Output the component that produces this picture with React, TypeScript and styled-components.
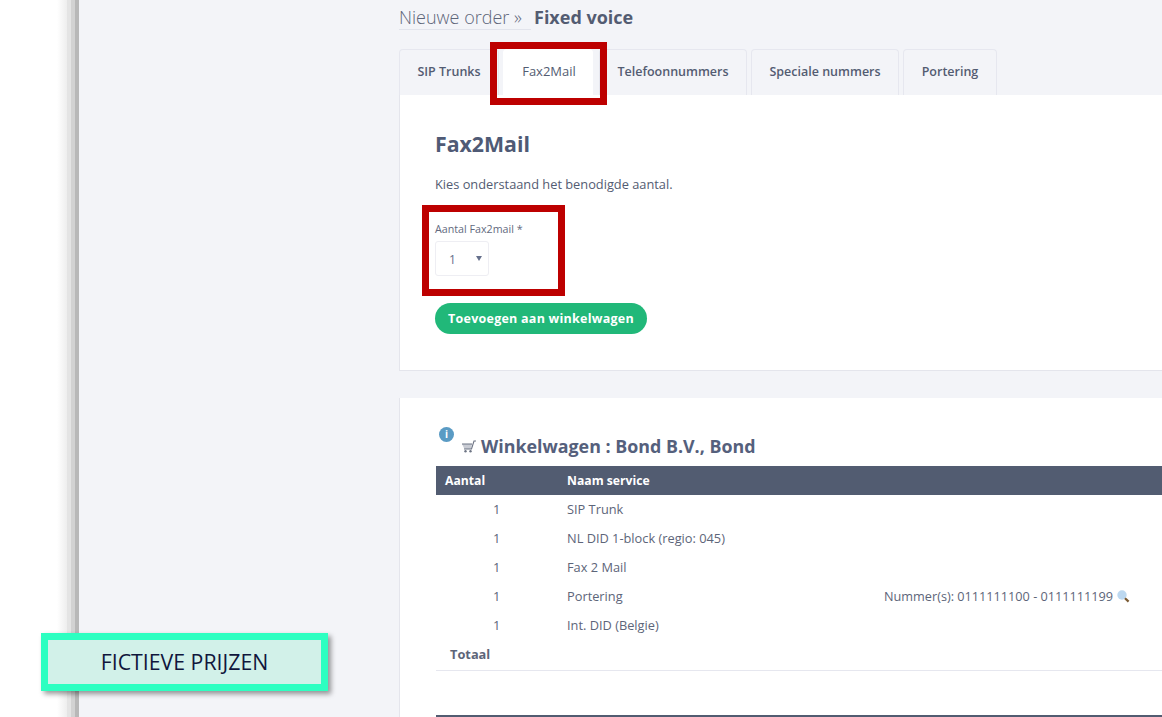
import styled, { createGlobalStyle } from 'styled-components';

const GlobalStyle = createGlobalStyle`
  html, body {
    margin: 0;
    padding: 0;
    height: 100%;
    overflow: hidden;
    background: #f3f4f8;
    font-family: "Open Sans", sans-serif;
    color: #535c72;
  }
`;

const Page = styled.div`
  position: relative;
  display: flex;
  width: 1162px;
  height: 717px;
  overflow: hidden;
`;

const Sidebar = styled.div`
  flex: 0 0 79px;
  box-sizing: border-box;
  background: linear-gradient(
    90deg,
    #fff 0,
    #fff 57px,
    #eeeeee 67px,
    #e4e4e4 67px,
    #e4e4e4 71px,
    #d2d2d2 71px,
    #d2d2d2 75px,
    #b8b8b8 75px,
    #b8b8b8 79px
  );
`;

const Main = styled.main`
  flex: 1;
  min-width: 0;
  padding: 5px 0 0 320px;
`;

const Breadcrumb = styled.div`
  display: flex;
  align-items: flex-start;
  height: 44px;
  font-size: 18px;
  line-height: 24px;
  white-space: nowrap;
`;

const Crumb = styled.span`
  box-sizing: border-box;
  width: 132px;
  height: 25px;
  font-weight: 300;
  color: #5d6579;
  border-bottom: 1px solid #e2e4ec;
`;

const CrumbCurrent = styled.span`
  font-weight: 700;
  margin-left: 3px;
`;

const Tabs = styled.div`
  display: flex;
  gap: 4px;
  height: 46px;
`;

const Tab = styled.div<{ $active?: boolean; $width: number }>`
  box-sizing: border-box;
  width: ${props => props.$width}px;
  height: 46px;
  margin-right: ${props => (props.$active ? 2 : 0)}px;
  padding: ${props => (props.$active ? '12px 0 0 2px' : '13px 0 0')};
  text-align: center;
  font-size: ${props => (props.$active ? 13 : 12.5)}px;
  line-height: 18px;
  font-weight: ${props => (props.$active ? 400 : 600)};
  background: ${props => (props.$active ? '#fff' : '#f3f4f8')};
  border: 1px solid ${props => (props.$active ? '#fff' : '#e6e7ef')};
  border-bottom: none;
  border-radius: 4px 4px 0 0;
`;

const Panel = styled.section`
  box-sizing: border-box;
  background: #fff;
  border-left: 1px solid #e4e5ec;
  border-bottom: 1px solid #e4e5ec;
`;

const FormPanel = styled(Panel)`
  height: 276px;
  padding: 34px 0 0 35px;
  margin-bottom: 27px;
`;

const CartPanel = styled(Panel)`
  height: 330px;
  padding: 24px 0 0 36px;
  border-bottom: none;
`;

const Title = styled.h2`
  margin: 0;
  font-size: 21.3px;
  line-height: 30px;
  font-weight: 700;
  color: #4f5a75;
`;

const Intro = styled.p`
  margin: 15px 0 0;
  font-size: 12.8px;
  line-height: 20px;
`;

const Field = styled.div`
  margin-top: 28px;
`;

const FieldLabel = styled.label`
  display: block;
  font-size: 10.7px;
  line-height: 14px;
  color: #626a7e;
`;

const SelectBox = styled.div`
  position: relative;
  box-sizing: border-box;
  width: 54px;
  height: 35px;
  margin-top: 5px;
  padding-left: 13px;
  border: 1px solid #eeeef3;
  border-radius: 3px;
  font-size: 12px;
  line-height: 35px;
  color: #66708c;
`;

const Caret = styled.span`
  position: absolute;
  right: 6px;
  top: 14px;
  width: 0;
  height: 0;
  border-left: 3px solid transparent;
  border-right: 3px solid transparent;
  border-top: 5px solid #66708c;
`;

const AddButton = styled.button`
  display: block;
  box-sizing: border-box;
  width: 212px;
  height: 31px;
  margin-top: 27px;
  padding: 0;
  border: none;
  border-radius: 16px;
  background: #21b879;
  color: #fff;
  font-family: "Open Sans", sans-serif;
  font-size: 12.5px;
  font-weight: 700;
  letter-spacing: 0.25px;
`;

const CartHeading = styled.div`
  position: relative;
  display: flex;
  align-items: center;
  gap: 4px;
  height: 24px;
  padding-left: 25px;
  margin-top: 12px;
  margin-bottom: 8px;
`;

const InfoDot = styled.span`
  position: absolute;
  left: 3px;
  top: -7px;
  width: 15px;
  height: 15px;
  border-radius: 50%;
  background: #5a9bc4;
  color: #fff;
  font-size: 10px;
  font-weight: 700;
  line-height: 15px;
  text-align: center;
`;

const CartTitle = styled.h3`
  margin: 0;
  font-size: 17.85px;
  font-weight: 700;
  line-height: 24px;
  color: #55607c;
`;

const CartTable = styled.table`
  width: 726px;
  border-collapse: collapse;
  table-layout: fixed;
  font-size: 12.8px;
  border-bottom: 1px solid #e6e7ef;
`;

const HeaderCell = styled.th<{ $width?: number }>`
  width: ${props => (props.$width ? `${props.$width}px` : 'auto')};
  height: 29px;
  padding: 0 0 0 9px;
  box-sizing: border-box;
  background: #525c71;
  color: #fff;
  font-size: 12.2px;
  font-weight: 700;
  text-align: left;
`;

const Row = styled.tr`
  height: 29.2px;
`;

const Cell = styled.td`
  padding: 0 0 2px 9px;
  line-height: 18px;
  color: #5d6579;
  white-space: nowrap;
`;

const QtyCell = styled(Cell)`
  padding-left: 57px;
`;

const TotalCell = styled(Cell)`
  padding-left: 14px;
  font-weight: 700;
`;

const NumberRange = styled.span`
  display: inline-flex;
  align-items: center;
  gap: 4px;
  font-size: 12.7px;
`;

const NextTableBar = styled.div`
  height: 2px;
  margin-top: 44px;
  background: #525c71;
`;

const Highlight = styled.div<{ $left: number; $top: number; $width: number; $height: number }>`
  position: absolute;
  box-sizing: border-box;
  left: ${props => props.$left}px;
  top: ${props => props.$top}px;
  width: ${props => props.$width}px;
  height: ${props => props.$height}px;
  border: 7px solid #bd0000;
`;

const PriceBadge = styled.div`
  position: absolute;
  left: 41px;
  top: 633px;
  box-sizing: border-box;
  width: 287px;
  height: 58px;
  border: 7px solid #2dffc1;
  background: #d2f1e9;
  box-shadow: 3px 3px 5px rgba(0, 0, 0, 0.4);
  font-size: 21.3px;
  line-height: 44px;
  text-align: center;
  color: #10163c;
`;

const CartIcon = () => (
  <svg width="16" height="14" viewBox="0 0 16 14" fill="none">
    <path d="M1 5h10l-1 5H3.5z" fill="#c9ccd4" />
    <path d="M1 5h10M3 10h7.5L13 2h2" stroke="#6d7484" strokeWidth="1.1" />
    <circle cx="4.5" cy="12.2" r="1.2" fill="#6d7484" />
    <circle cx="9.5" cy="12.2" r="1.2" fill="#6d7484" />
  </svg>
);

const SearchIcon = () => (
  <svg width="13" height="13" viewBox="0 0 13 13">
    <circle cx="5" cy="5" r="4.7" fill="#bcd8f0" />
    <path d="M8 8.2l3.6 3.4" stroke="#7a5a32" strokeWidth="2.2" />
  </svg>
);

const tabs = [
  { label: 'SIP Trunks', width: 100 },
  { label: 'Fax2Mail', width: 90, active: true },
  { label: 'Telefoonnummers', width: 148 },
  { label: 'Speciale nummers', width: 148 },
  { label: 'Portering', width: 94 },
];

const cartRows = [
  { qty: 1, name: 'SIP Trunk' },
  { qty: 1, name: 'NL DID 1-block (regio: 045)' },
  { qty: 1, name: 'Fax 2 Mail' },
  { qty: 1, name: 'Portering', numbers: 'Nummer(s): 0111111100 - 0111111199' },
  { qty: 1, name: 'Int. DID (Belgie)' },
];

export default function App() {
  return (
    <Page>
      <GlobalStyle />
      <Sidebar />
      <Main>
        <Breadcrumb>
          <Crumb>Nieuwe order »</Crumb>
          <CrumbCurrent>Fixed voice</CrumbCurrent>
        </Breadcrumb>
        <Tabs>
          {tabs.map(tab => (
            <Tab key={tab.label} $active={tab.active} $width={tab.width}>
              {tab.label}
            </Tab>
          ))}
        </Tabs>
        <FormPanel>
          <Title>Fax2Mail</Title>
          <Intro>Kies onderstaand het benodigde aantal.</Intro>
          <Field>
            <FieldLabel>Aantal Fax2mail *</FieldLabel>
            <SelectBox>
              1
              <Caret />
            </SelectBox>
          </Field>
          <AddButton>Toevoegen aan winkelwagen</AddButton>
        </FormPanel>
        <CartPanel>
          <CartHeading>
            <InfoDot>i</InfoDot>
            <CartIcon />
            <CartTitle>Winkelwagen : Bond B.V., Bond</CartTitle>
          </CartHeading>
          <CartTable>
            <thead>
              <tr>
                <HeaderCell $width={122}>Aantal</HeaderCell>
                <HeaderCell $width={317}>Naam service</HeaderCell>
                <HeaderCell />
              </tr>
            </thead>
            <tbody>
              {cartRows.map(row => (
                <Row key={row.name}>
                  <QtyCell>{row.qty}</QtyCell>
                  <Cell>{row.name}</Cell>
                  <Cell>
                    {row.numbers && (
                      <NumberRange>
                        {row.numbers}
                        <SearchIcon />
                      </NumberRange>
                    )}
                  </Cell>
                </Row>
              ))}
              <Row>
                <TotalCell colSpan={3}>Totaal</TotalCell>
              </Row>
            </tbody>
          </CartTable>
          <NextTableBar />
        </CartPanel>
      </Main>
      <Highlight $left={490} $top={42} $width={117} $height={63} />
      <Highlight $left={422} $top={205} $width={143} $height={91} />
      <PriceBadge>FICTIEVE PRIJZEN</PriceBadge>
    </Page>
  );
}
